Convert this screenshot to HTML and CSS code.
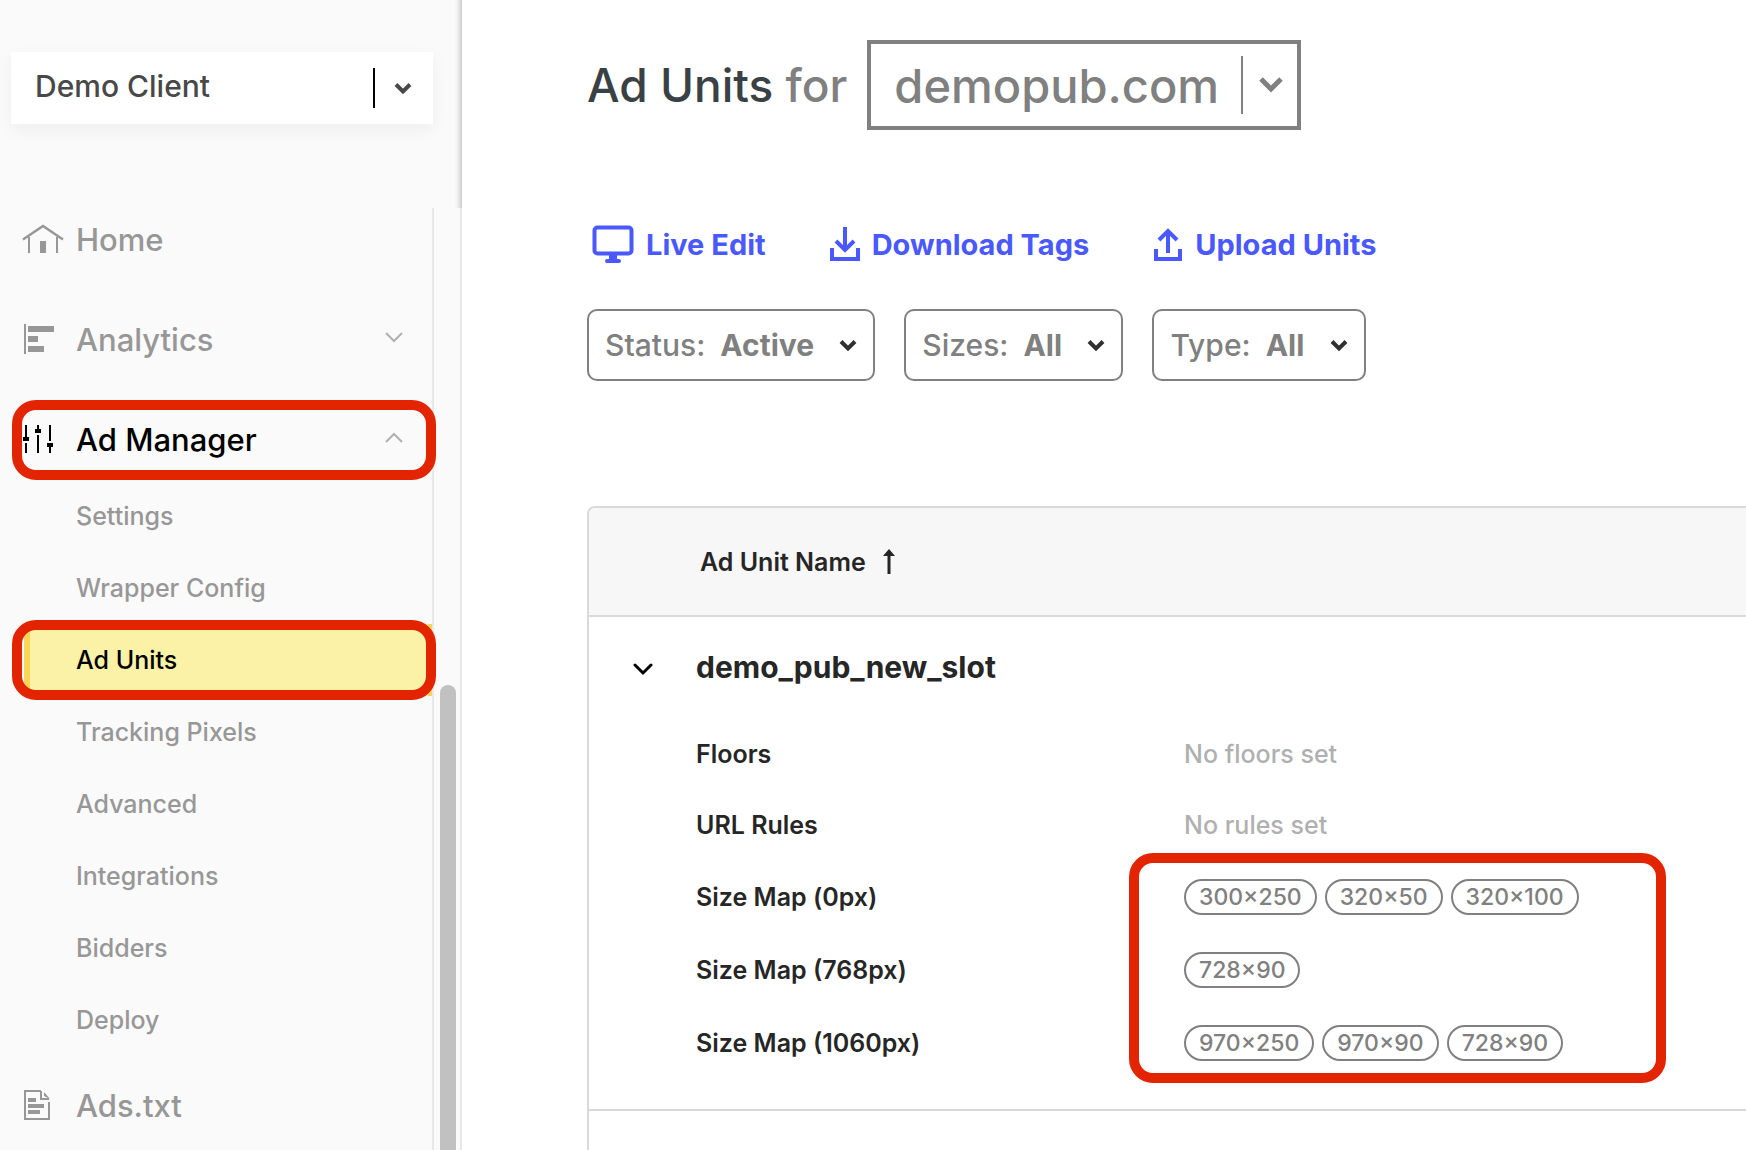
FILE: index.html
```html
<!DOCTYPE html>
<html lang="en">
<head>
<meta charset="utf-8">
<title>Ad Units</title>
<link rel="stylesheet" href="styles.css">
</head>
<body>
<div class="app">
  <aside class="sidebar">
    <div class="sidebar-top">
      <label class="client-picker">
        <select class="client-select" aria-label="Client"><option>Demo Client</option></select>
        <svg class="caret" width="18" height="13" viewBox="0 0 18 13"><path d="M2 2.500 9 9.500l7-7" fill="none" stroke="#484848" stroke-width="4"/></svg>
      </label>
    </div>
    <div class="sidebar-scroll">
      <nav class="nav">
        <a class="nav-item" href="#">
          <svg class="nav-icon" width="42" height="30" viewBox="0 0 42 30"><path d="M1 15.500 21 2l20 13.500" fill="none" stroke="#979797" stroke-width="2.500"/><path d="M6 13h2v16H6zM34 13h2v16h-2zM18 17h6v12h-6z" fill="#979797"/></svg>
          <span>Home</span>
        </a>
        <a class="nav-item" href="#">
          <svg class="nav-icon" width="42" height="30" viewBox="0 0 42 30"><path d="M2 0h2v30H2zM6 2h26v6H6zM6 12h10v6H6zM6 22h16v6H6z" fill="#979797"/></svg>
          <span>Analytics</span>
          <svg class="nav-caret" width="18" height="11" viewBox="0 0 18 11"><path d="m1 1 8 8 8-8" fill="none" stroke="#b0b0b0" stroke-width="2"/></svg>
        </a>
        <a class="nav-item nav-item-open marked" href="#">
          <svg class="nav-icon" width="42" height="30" viewBox="0 0 42 30"><path d="M3 1h2v12h2v4H1v-4h2zM3 19h2v10H3zM15 1h2v4h2v4h-6V5h2zM15 11h2v18h-2zM27 1h2v16h-2zM25 19h6v4h-2v6h-2v-6h-2z" fill="#000"/></svg>
          <span>Ad Manager</span>
          <svg class="nav-caret" width="18" height="11" viewBox="0 0 18 11"><path d="m1 10 8-8 8 8" fill="none" stroke="#b0b0b0" stroke-width="2"/></svg>
        </a>
        <div class="subnav">
          <a class="subnav-item" href="#">Settings</a>
          <a class="subnav-item" href="#">Wrapper Config</a>
          <a class="subnav-item subnav-item-current marked" href="#">Ad Units</a>
          <a class="subnav-item" href="#">Tracking Pixels</a>
          <a class="subnav-item" href="#">Advanced</a>
          <a class="subnav-item" href="#">Integrations</a>
          <a class="subnav-item" href="#">Bidders</a>
          <a class="subnav-item" href="#">Deploy</a>
        </div>
        <a class="nav-item" href="#">
          <svg class="nav-icon" width="42" height="30" viewBox="0 0 42 30"><path d="M19 1H3v28h24V12M19 1v8h8" fill="none" stroke="#979797" stroke-width="2"/><path d="M22 2v4l6 3zM6 8h8v4H6zM6 14h16v4H6zM6 20h12v4H6z" fill="#979797"/></svg>
          <span>Ads.txt</span>
        </a>
      </nav>
      <div class="scroll-track"><div class="scroll-thumb"></div></div>
    </div>
  </aside>

  <main class="main">
    <header class="page-head">
      <h1 class="page-title">Ad Units <span class="page-title-for">for</span></h1>
      <label class="site-picker">
        <select class="site-select" aria-label="Site"><option>demopub.com</option></select>
        <svg class="caret" width="24" height="18" viewBox="0 0 24 18"><path d="m2 3 10 10L22 3" fill="none" stroke="#808080" stroke-width="5"/></svg>
      </label>
    </header>

    <div class="actions">
      <a class="action" href="#">
        <svg width="42" height="38" viewBox="0 0 42 38"><rect x="2.500" y="2.500" width="37" height="26" rx="3" fill="none" stroke="#4a58ff" stroke-width="4"/><path d="M17 30h8v4h2a1.500 1.500 0 0 1 0 4H15a1.500 1.500 0 0 1 0-4h2z" fill="#4a58ff"/></svg>
        <span>Live Edit</span>
      </a>
      <a class="action" href="#">
        <svg width="30" height="34" viewBox="0 0 30 34"><path d="M15 0v24M6 14l9 9 9-9M2 21v11h26V21" fill="none" stroke="#4a58ff" stroke-width="4"/></svg>
        <span>Download Tags</span>
      </a>
      <a class="action" href="#">
        <svg width="30" height="34" viewBox="0 0 30 34"><path d="M15 26V5M6 13l9-9 9 9M3 22v10h24V22" fill="none" stroke="#4a58ff" stroke-width="4"/></svg>
        <span>Upload Units</span>
      </a>
    </div>

    <div class="filters">
      <label class="filter">
        <span>Status:</span>
        <select class="filter-select"><option>Active</option></select>
        <svg class="caret" width="18" height="13" viewBox="0 0 18 13"><path d="m2 2.500 7 7 7-7" fill="none" stroke="#303030" stroke-width="4"/></svg>
      </label>
      <label class="filter">
        <span>Sizes:</span>
        <select class="filter-select"><option>All</option></select>
        <svg class="caret" width="18" height="13" viewBox="0 0 18 13"><path d="m2 2.500 7 7 7-7" fill="none" stroke="#303030" stroke-width="4"/></svg>
      </label>
      <label class="filter">
        <span>Type:</span>
        <select class="filter-select"><option>All</option></select>
        <svg class="caret" width="18" height="13" viewBox="0 0 18 13"><path d="m2 2.500 7 7 7-7" fill="none" stroke="#303030" stroke-width="4"/></svg>
      </label>
    </div>

    <section class="units">
      <div class="units-head">
        <span>Ad Unit Name</span>
        <svg width="12" height="26" viewBox="0 0 12 26"><path d="M6 0l6 7H7.500v18h-3V7H0z" fill="#262626"/></svg>
      </div>
      <div class="unit">
        <div class="unit-title">
          <button class="unit-toggle" type="button" aria-label="Collapse demo_pub_new_slot">
            <svg width="20" height="14" viewBox="0 0 20 14"><path d="m2 2 8 8 8-8" fill="none" stroke="#000" stroke-width="3" stroke-linecap="round"/></svg>
          </button>
          <h2 class="unit-name">demo_pub_new_slot</h2>
        </div>
        <table class="details">
          <tbody>
            <tr><th scope="row">Floors</th><td class="empty">No floors set</td></tr>
            <tr><th scope="row">URL Rules</th><td class="empty">No rules set</td></tr>
          </tbody>
          <tbody class="size-maps">
            <tr><th scope="row">Size Map (0px)</th><td><div class="sizes"><span class="size">300×250</span><span class="size">320×50</span><span class="size">320×100</span></div></td></tr>
            <tr><th scope="row">Size Map (768px)</th><td><div class="sizes"><span class="size">728×90</span></div></td></tr>
            <tr><th scope="row">Size Map (1060px)</th><td><div class="sizes"><span class="size">970×250</span><span class="size">970×90</span><span class="size">728×90</span></div></td></tr>
          </tbody>
        </table>
        <div class="size-marker"></div>
      </div>
    </section>
  </main>
</div>
</body>
</html>
```
FILE: styles.css
```css
*,
*::after { box-sizing: border-box; }

body {
  margin: 0;
  background: #fff;
  font-family: Inter, "Liberation Sans", sans-serif;
  font-weight: 500;
}

a { color: inherit; text-decoration: none; }

select {
  appearance: none;
  border: 0;
  margin: 0;
  padding: 0;
  background: transparent;
  color: inherit;
  font: inherit;
}

svg { flex: none; display: block; }

.caret { pointer-events: none; }

.app {
  display: flex;
  height: 100vh;
  overflow: hidden;
}

/* Sidebar */
.sidebar {
  display: flex;
  flex-direction: column;
  flex: none;
  width: 462px;
  background: #fafafa;
}

.sidebar-top {
  flex: none;
  height: 208px;
  padding: 52px 29px 0 11px;
  box-shadow: inset -7px 0 6px -6px rgba(0, 0, 0, 0.3);
}

.client-picker {
  display: flex;
  align-items: center;
  height: 72px;
  padding: 0 21px 0 24px;
  background: #fff;
  box-shadow: 0 6px 16px rgba(0, 0, 0, 0.05);
  color: #484848;
  font-size: 30px;
}

.client-select {
  flex: 1;
  height: 40px;
  margin-right: 19px;
  padding-bottom: 6px;
  border-right: 2px solid #000;
}

.sidebar-scroll {
  display: flex;
  flex: 1;
  min-height: 0;
  overflow: hidden;
}

.nav {
  flex: 1;
  display: flex;
  flex-direction: column;
}

.nav-item {
  display: flex;
  flex: none;
  align-items: center;
  height: 64px;
  margin-bottom: 36px;
  padding: 0 29px 2px 22px;
  color: #979797;
  font-size: 31px;
}

.nav-icon { margin-right: 12px; }

.nav-caret {
  margin-left: auto;
  margin-bottom: 4px;
}

.nav-item-open {
  margin-bottom: 8px;
  color: #000;
}

.marked { position: relative; }

.marked::after {
  content: "";
  position: absolute;
  top: 50%;
  left: 12px;
  right: -4px;
  height: 80px;
  margin-top: -40px;
  border: 10px solid #e32400;
  border-radius: 24px;
}

.subnav {
  flex: none;
  margin-bottom: 18px;
}

.subnav-item {
  display: flex;
  align-items: center;
  height: 72px;
  padding-left: 76px;
  color: #979797;
  font-size: 25px;
}

.subnav-item-current {
  margin-left: 24px;
  padding-left: 46px;
  border-left: 6px solid #f9d657;
  border-right: 4px solid #f9d657;
  background: #fcf2a7;
  color: #000;
}

.subnav-item-current::after {
  left: -18px;
  right: -8px;
}

.scroll-track {
  flex: none;
  width: 30px;
  padding: 477px 4px 0 6px;
  border-left: 2px solid #e8e8e8;
  border-right: 2px solid #e8e8e8;
}

.scroll-thumb {
  width: 16px;
  height: 100%;
  border-radius: 8px 8px 0 0;
  background: #c1c1c1;
}

/* Main column */
.main {
  flex: 1;
  min-width: 0;
  padding: 40px 0 0 125px;
}

.page-head {
  display: flex;
  align-items: center;
  gap: 20px;
  height: 90px;
}

.page-title {
  margin: 0;
  color: #394145;
  font-size: 46px;
  font-weight: 500;
}

.page-title-for { color: #808080; }

.site-picker {
  display: flex;
  align-items: center;
  height: 90px;
  padding: 0 14px 0 23px;
  border: 4px solid #808080;
  color: #808080;
  font-size: 47px;
}

.site-select {
  height: 58px;
  margin-right: 16px;
  padding-right: 22px;
  border-right: 2px solid #808080;
}

.actions {
  display: flex;
  align-items: center;
  gap: 64px;
  height: 38px;
  margin-top: 95px;
  padding-left: 5px;
  color: #4a58ff;
  font-size: 29px;
  font-weight: 700;
}

.action {
  display: flex;
  align-items: center;
  gap: 12px;
}

.filters {
  display: flex;
  gap: 29px;
  margin-top: 46px;
}

.filter {
  display: flex;
  align-items: center;
  height: 72px;
  padding: 0 16px;
  border: 2px solid #808080;
  border-radius: 10px;
  color: #808080;
  font-size: 30px;
}

.filter-select {
  margin: 0 25px 0 15px;
  font-weight: 700;
}

/* Ad unit list */
.units {
  min-height: 700px;
  margin-top: 125px;
  border: solid #d9d9d9;
  border-width: 2px 0 0 2px;
  border-radius: 8px 0 0 0;
  color: #262626;
}

.units-head {
  display: flex;
  align-items: center;
  gap: 17px;
  height: 109px;
  padding-left: 111px;
  border-bottom: 2px solid #d9d9d9;
  border-radius: 6px 0 0 0;
  background: #f7f7f7;
  font-size: 25px;
  font-weight: 600;
}

.unit {
  position: relative;
  padding: 14px 0 30px;
  border-bottom: 2px solid #d9d9d9;
}

.unit-title {
  display: flex;
  align-items: center;
  height: 72px;
  margin-bottom: 15px;
}

.unit-toggle {
  width: 107px;
  padding: 5px 0 0 44px;
  border: 0;
  background: none;
}

.unit-name {
  margin: 0;
  font-size: 30px;
  font-weight: 700;
}

.details {
  width: 100%;
  border-collapse: collapse;
  table-layout: fixed;
  font-size: 25px;
}

.details tr { height: 71px; }
.details .size-maps tr { height: 73px; }

.details th {
  width: 595px;
  padding: 0 0 0 107px;
  text-align: left;
  font-weight: 600;
}

.details td { padding: 0; }
.details .empty { color: #b0b0b0; }

.sizes {
  display: flex;
  gap: 8px;
}

.size {
  height: 36px;
  padding: 0 13px;
  border: 2px solid #808080;
  border-radius: 18px;
  color: #808080;
  font-size: 23px;
  line-height: 32px;
}

/* Highlight around the size chips */
.size-marker {
  position: absolute;
  left: 540px;
  bottom: 26px;
  width: 537px;
  height: 230px;
  border: 10px solid #e32400;
  border-radius: 24px;
}
```
